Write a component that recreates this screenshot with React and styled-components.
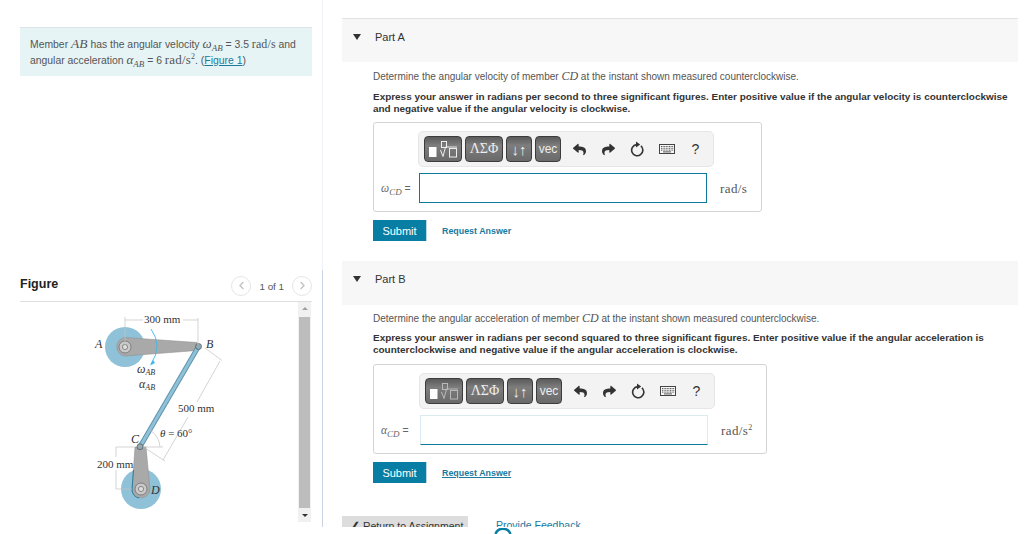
import React from "react";
import styled, { createGlobalStyle } from "styled-components";
import { FaReply, FaShare } from "react-icons/fa";
import { ChevronLeft, ChevronRight } from "lucide-react";

const GlobalStyle = createGlobalStyle`
  html, body { margin: 0; padding: 0; background: #fff; overflow: hidden; }
  body { font-family: "Liberation Sans", Arial, sans-serif; color: #555; }
`;

const Page = styled.div`
  display: flex;
  width: 1024px;
  height: 527px;
  overflow: hidden;
`;

const LeftColumn = styled.div`
  width: 323px;
  flex: none;
  display: flex;
  flex-direction: column;
`;

const IntroPanel = styled.div`
  height: 270px;
  box-sizing: border-box;
  padding: 27px 10px 0 20px;
  border-right: 1px solid #f1f1fb;
`;

const InfoBox = styled.div`
  height: 49px;
  box-sizing: border-box;
  background: #e6f4f5;
  border-top: 1px solid #dde3e8;
  padding: 8px 10px 0;
  font-size: 10.4px;
  line-height: 15px;
  color: #555;
  white-space: nowrap;
`;

const MathVar = styled.span`
  font-family: "Liberation Serif", serif;
  font-style: italic;
  font-size: ${props => props.$size || 13}px;
`;

const MathUnit = styled.span`
  font-family: "Liberation Serif", serif;
  font-size: ${props => props.$size || 12}px;
  letter-spacing: ${props => props.$spacing || 0.4}px;
  color: #555;
`;

const MathSub = styled.sub`
  font-family: "Liberation Serif", serif;
  font-style: italic;
  font-size: 9px;
  line-height: 0;
  vertical-align: -3px;
`;

const MathSup = styled.sup`
  font-family: "Liberation Serif", serif;
  font-size: 8px;
  line-height: 0;
  vertical-align: 5px;
`;

const FigureLink = styled.a`
  color: #1a7a9e;
  text-decoration: underline;
`;

const FigurePanel = styled.div`
  flex: 1;
  box-sizing: border-box;
  padding: 0 10px 0 20px;
  border-right: 1px solid #c9d5e6;
`;

const FigureHeader = styled.div`
  height: 32px;
  box-sizing: border-box;
  border-bottom: 1px solid #dedede;
  display: flex;
  align-items: center;
  justify-content: space-between;
  padding-bottom: 4px;
`;

const FigureTitle = styled.h3`
  margin: 0;
  font-size: 12.5px;
  font-weight: bold;
  color: #222;
`;

const Pager = styled.div`
  margin-top: 4px;
  display: flex;
  align-items: center;
  gap: 8px;
  font-size: 9.8px;
  color: #555;
`;

const PagerCount = styled.span`
  padding-top: 2px;
`;

const PagerButton = styled.span`
  width: 18px;
  height: 18px;
  border: 1px solid #e6e6e6;
  border-radius: 50%;
  display: flex;
  align-items: center;
  justify-content: center;
  color: #bdbdbd;
`;

const FigureViewport = styled.div`
  display: flex;
  height: 220px;
`;

const FigureDrawing = styled.svg`
  width: 278px;
  height: 220px;
  flex: none;
`;

const ScrollTrack = styled.div`
  width: 13px;
  background: #f1f1f1;
  display: flex;
  flex-direction: column;
  align-items: center;
  justify-content: space-between;
  padding: 5px 0;
  box-sizing: border-box;
`;

const ScrollArrow = styled.span`
  width: 0;
  height: 0;
  border-left: 3px solid transparent;
  border-right: 3px solid transparent;
  border-bottom: ${props => (props.$up ? "3px solid #a0a0a0" : "none")};
  border-top: ${props => (props.$up ? "none" : "3px solid #333")};
`;

const ScrollThumb = styled.span`
  width: 11px;
  height: 191px;
  background: #bdbdbd;
`;

const MainColumn = styled.div`
  margin-left: 19px;
  width: 676px;
  flex: none;
`;

const PartHeader = styled.div`
  height: 44px;
  box-sizing: border-box;
  margin-top: ${props => props.$top}px;
  background: #f7f7f7;
  border-top: ${props => (props.$ruled ? "1px solid #e2e2e2" : "none")};
  display: flex;
  align-items: flex-start;
  padding: 12px 0 0 11px;
  gap: 14px;
  font-size: 11px;
  color: #333;
`;

const Caret = styled.span`
  width: 0;
  height: 0;
  margin-top: 3px;
  border-left: 4px solid transparent;
  border-right: 4px solid transparent;
  border-top: 6px solid #333;
`;

const PartBody = styled.div`
  padding-left: 31px;
`;

const Prompt = styled.p`
  margin: ${props => props.$top}px 0 0;
  font-size: 10px;
  line-height: 14px;
  color: #555;
  white-space: nowrap;
`;

const Instruction = styled.p`
  margin: ${props => props.$top}px 0 0;
  font-size: 9.95px;
  line-height: 12px;
  font-weight: bold;
  color: #333;
  white-space: nowrap;
`;

const AnswerBox = styled.div`
  margin-top: ${props => props.$top}px;
  width: ${props => props.$width}px;
  height: 90px;
  box-sizing: border-box;
  border: 1px solid #d4d4d4;
  border-radius: 3px;
  padding-top: 8px;
`;

const Toolbar = styled.div`
  margin-left: ${props => props.$indent}px;
  width: 296px;
  height: 36px;
  box-sizing: border-box;
  background: #f3f3f3;
  border: 1px solid #e6e6e6;
  border-radius: 5px;
  display: flex;
  align-items: center;
  padding-left: 5px;
  gap: 3px;
`;

const ToolButton = styled.span`
  width: ${props => props.$width}px;
  height: 26px;
  box-sizing: border-box;
  flex: none;
  border: 1px solid #3c3c3c;
  border-radius: 4px;
  background: linear-gradient(#5b5b5b, #7d7d7d 35%, #6a6a6a);
  color: #eee;
  display: flex;
  align-items: center;
  justify-content: center;
  font-size: ${props => props.$size || 11}px;
  font-family: ${props => (props.$serif ? '"Liberation Serif", serif' : '"Liberation Sans", sans-serif')};
`;

const ToolIcon = styled.span`
  width: 29px;
  flex: none;
  display: flex;
  align-items: center;
  justify-content: center;
  color: #333;
  font-size: 14px;
`;

const IconGroup = styled.div`
  display: flex;
  margin-left: 1px;
`;

const AnswerRow = styled.div`
  margin-top: 6px;
  display: grid;
  grid-template-columns: ${props => props.$indent}px 288px auto;
  align-items: center;
`;

const AnswerLabel = styled.span`
  padding-left: 7px;
  font-size: 10.5px;
  color: #666;
  white-space: nowrap;
`;

const AnswerInput = styled.input`
  height: 30px;
  box-sizing: border-box;
  padding: 0;
  outline: none;
  background: #fff;
  border: 1px solid ${props => (props.$focused ? "#0d7a9c" : "#dcebef")};
  border-bottom-color: #0d7a9c;
`;

const AnswerUnit = styled.span`
  padding-left: 13px;
`;

const ActionRow = styled.div`
  margin-top: 8px;
  display: flex;
  align-items: center;
  gap: 15px;
`;

const SubmitButton = styled.button`
  width: 54px;
  height: 21px;
  padding: 0;
  border: none;
  border-right: 1px solid #b9d7e2;
  background: #087ea4;
  color: #fff;
  font-family: inherit;
  font-size: 11px;
`;

const RequestLink = styled.a`
  font-size: 8.9px;
  font-weight: bold;
  color: #1a7a9e;
  text-decoration: ${props => (props.$underlined ? "underline" : "none")};
`;

const FooterRow = styled.div`
  margin: 33px 0 0 -31px;
  display: flex;
  gap: 28px;
`;

const ReturnButton = styled.button`
  width: 126px;
  height: 20px;
  padding: 0 0 0 9px;
  border: none;
  background: #ddd;
  color: #333;
  font-family: inherit;
  font-size: 10.5px;
  text-align: left;
  white-space: nowrap;
  display: block;
`;

const FeedbackLink = styled.a`
  padding-top: 3px;
  font-size: 10.5px;
  color: #1a7a9e;
`;

const Spinner = styled.svg`
  position: absolute;
  left: 494px;
  top: 528px;
  width: 18px;
  height: 6px;
`;

function ResetIcon() {
  return (
    <svg width="15" height="16" viewBox="0 0 15 16" fill="none">
      <path d="M10.9 4.9 A5.6 5.6 0 1 1 6.5 3.6" stroke="#333" strokeWidth="1.6" />
      <path d="M6 0.6 L10.2 3.6 L6 6.6 Z" fill="#333" />
    </svg>
  );
}

function KeyboardIcon() {
  const keys = [];
  for (let row = 0; row < 3; row++) {
    for (let col = 0; col < 8; col++) {
      keys.push(<rect key={row + "-" + col} x={2 + col * 1.6} y={2 + row * 1.8} width="1" height="1" fill="#555" />);
    }
  }
  return (
    <svg width="16" height="10" viewBox="0 0 16 10">
      <rect x="0.5" y="0.5" width="15" height="9" fill="#f8f8f8" stroke="#444" />
      {keys}
      <rect x="4" y="7.4" width="8" height="1" fill="#555" />
    </svg>
  );
}

function RootIcon({ faded }) {
  const tone = faded ? "#b8b8b8" : "#eee";
  return (
    <svg width="34" height="22" viewBox="0 0 34 22" fill="none">
      <rect x="3" y="9" width="7.5" height="10" fill="#fff" />
      <rect x="15.5" y="3.5" width="5" height="6" stroke={tone} />
      <path d="M14.5 12 L17 18.5 L19.5 9 H31" stroke={tone} strokeWidth="1" />
      <rect x="23.5" y="10.5" width="7" height="8.5" stroke={tone} />
    </svg>
  );
}

function Toolbars({ indent, faded }) {
  return (
    <Toolbar $indent={indent}>
      <ToolButton $width={38}><RootIcon faded={faded} /></ToolButton>
      <ToolButton $width={38} $serif $size={14}>ΛΣΦ</ToolButton>
      <ToolButton $width={26} $size={15}>↓↑</ToolButton>
      <ToolButton $width={26} $size={12}>vec</ToolButton>
      <IconGroup>
        <ToolIcon><FaReply size={13} /></ToolIcon>
        <ToolIcon><FaShare size={13} /></ToolIcon>
        <ToolIcon><ResetIcon /></ToolIcon>
        <ToolIcon><KeyboardIcon /></ToolIcon>
        <ToolIcon>?</ToolIcon>
      </IconGroup>
    </Toolbar>
  );
}

function Mechanism() {
  const dim = { stroke: "#c2c2c2", strokeWidth: 0.7, fill: "none" };
  const label = { fontFamily: "Liberation Serif, serif", fontSize: 11, fill: "#333" };
  const letter = { ...label, fontStyle: "italic", fontSize: 12 };
  return (
    <FigureDrawing viewBox="20 302 278 220">
      <circle cx="125" cy="347" r="20" fill="#8fc2d8" />
      <circle cx="141" cy="489" r="20" fill="#8fc2d8" />
      <path d="M125 337.5 L197 342.5 L197 350.5 L125 356 A9.3 9.3 0 0 1 125 337.5 Z" fill="#a9a9a9" stroke="#8a8a8a" strokeWidth="0.5" />
      <path d="M198.5 346.5 L140 446.7" stroke="#5f93ad" strokeWidth="5" />
      <path d="M198.5 346.5 L140 446.7" stroke="#8fc2d8" strokeWidth="3" />
      <path d="M135 447 L146 447 L150 489 A9 9 0 0 1 132 489 Z" fill="#a9a9a9" stroke="#8a8a8a" strokeWidth="0.5" />
      <path d="M133.5 470 L132 490 Q133 497 139 498" stroke="#2f7f9e" strokeWidth="1" fill="none" />
      <circle cx="125" cy="347" r="6" fill="#c9c9c9" stroke="#666" strokeWidth="0.7" />
      <circle cx="125" cy="347" r="2.6" fill="#ddd" stroke="#666" strokeWidth="0.7" />
      <circle cx="141" cy="489" r="6" fill="#c9c9c9" stroke="#666" strokeWidth="0.7" />
      <circle cx="141" cy="489" r="2.6" fill="#ddd" stroke="#666" strokeWidth="0.7" />
      <circle cx="198.5" cy="346.5" r="3" fill="#8fa9b5" stroke="#555" strokeWidth="0.7" />
      <circle cx="140" cy="446.7" r="3" fill="#8fa9b5" stroke="#555" strokeWidth="0.7" />
      <path d="M151 329 Q163 346 151 364" stroke="#3bb8ec" strokeWidth="0.9" fill="none" />
      <path d="M150 365.5 L153 360 L155 363 Z" fill="#3bb8ec" />

      <path d="M125 317 V345 M198 318 V345 M125 320 H143 M183 320 H198" {...dim} />
      <path d="M205 348 L222 360.5 M220 361 L197 402 M188 417 L163 460 M145 448 L165 461" {...dim} />
      <path d="M143 447 H163 M150 430 A22 22 0 0 1 160 447" {...dim} />
      <path d="M116 447 H135 M116 489 H132 M116 447 V457 M116 470 V489" {...dim} />

      <text x="144" y="323" {...label}>300 mm</text>
      <text x="95" y="348" {...letter}>A</text>
      <text x="206" y="348" {...letter}>B</text>
      <text x="137" y="373" {...letter} fontSize="12">ω<tspan fontSize="8" dy="2">AB</tspan></text>
      <text x="139" y="388" {...letter} fontSize="12">α<tspan fontSize="8" dy="2">AB</tspan></text>
      <text x="178" y="412" {...label}>500 mm</text>
      <text x="160" y="437" {...label}><tspan fontStyle="italic">θ</tspan> = 60°</text>
      <text x="131" y="443" {...letter}>C</text>
      <text x="97" y="468" {...label}>200 mm</text>
      <text x="151" y="494" {...letter}>D</text>
    </FigureDrawing>
  );
}

export default function App() {
  return (
    <>
      <GlobalStyle />
      <Page>
        <LeftColumn>
          <IntroPanel>
            <InfoBox>
              Member <MathVar $size={13.5}>AB</MathVar> has the angular velocity <MathVar>ω</MathVar><MathSub>AB</MathSub> = 3.5 <MathUnit $spacing={0.1}>rad/s</MathUnit> and
              <br />
              angular acceleration <MathVar>α</MathVar><MathSub>AB</MathSub> = 6 <MathUnit $size={13} $spacing={0.2}>rad/s</MathUnit><MathSup>2</MathSup>. (<FigureLink>Figure 1</FigureLink>)
            </InfoBox>
          </IntroPanel>
          <FigurePanel>
            <FigureHeader>
              <FigureTitle>Figure</FigureTitle>
              <Pager>
                <PagerButton><ChevronLeft size={13} /></PagerButton>
                <PagerCount>1 of 1</PagerCount>
                <PagerButton><ChevronRight size={13} /></PagerButton>
              </Pager>
            </FigureHeader>
            <FigureViewport>
              <Mechanism />
              <ScrollTrack>
                <ScrollArrow $up />
                <ScrollThumb />
                <ScrollArrow />
              </ScrollTrack>
            </FigureViewport>
          </FigurePanel>
        </LeftColumn>

        <MainColumn>
          <PartHeader $top={18} $ruled>
            <Caret />
            Part A
          </PartHeader>
          <PartBody>
            <Prompt $top={7}>
              Determine the angular velocity of member <MathVar $size={12}>CD</MathVar> at the instant shown measured counterclockwise.
            </Prompt>
            <Instruction $top={7}>
              Express your answer in radians per second to three significant figures. Enter positive value if the angular velocity is counterclockwise
              <br />
              and negative value if the angular velocity is clockwise.
            </Instruction>
            <AnswerBox $width={389} $top={7}>
              <Toolbars indent={44} />
              <AnswerRow $indent={45}>
                <AnswerLabel><MathVar $size={11.5}>ω</MathVar><MathSub>CD</MathSub> =</AnswerLabel>
                <AnswerInput $focused />
                <AnswerUnit><MathUnit $size={13}>rad/s</MathUnit></AnswerUnit>
              </AnswerRow>
            </AnswerBox>
            <ActionRow>
              <SubmitButton>Submit</SubmitButton>
              <RequestLink>Request Answer</RequestLink>
            </ActionRow>
          </PartBody>

          <PartHeader $top={20}>
            <Caret />
            Part B
          </PartHeader>
          <PartBody>
            <Prompt $top={6}>
              Determine the angular acceleration of member <MathVar $size={12}>CD</MathVar> at the instant shown measured counterclockwise.
            </Prompt>
            <Instruction $top={6}>
              Express your answer in radians per second squared to three significant figures. Enter positive value if the angular acceleration is
              <br />
              counterclockwise and negative value if the angular acceleration is clockwise.
            </Instruction>
            <AnswerBox $width={394} $top={8}>
              <Toolbars indent={45} faded />
              <AnswerRow $indent={46}>
                <AnswerLabel><MathVar $size={11.5}>α</MathVar><MathSub>CD</MathSub> =</AnswerLabel>
                <AnswerInput />
                <AnswerUnit><MathUnit $size={13}>rad/s</MathUnit><MathSup>2</MathSup></AnswerUnit>
              </AnswerRow>
            </AnswerBox>
            <ActionRow>
              <SubmitButton>Submit</SubmitButton>
              <RequestLink $underlined>Request Answer</RequestLink>
            </ActionRow>
            <FooterRow>
              <ReturnButton>❮ Return to Assignment</ReturnButton>
              <FeedbackLink>Provide Feedback</FeedbackLink>
            </FooterRow>
          </PartBody>
        </MainColumn>
      </Page>
      <Spinner viewBox="0 0 18 6">
        <path d="M1.5 6 A8 8 0 0 1 16.5 6" stroke="#087ea4" strokeWidth="2.5" fill="none" />
      </Spinner>
    </>
  );
}
